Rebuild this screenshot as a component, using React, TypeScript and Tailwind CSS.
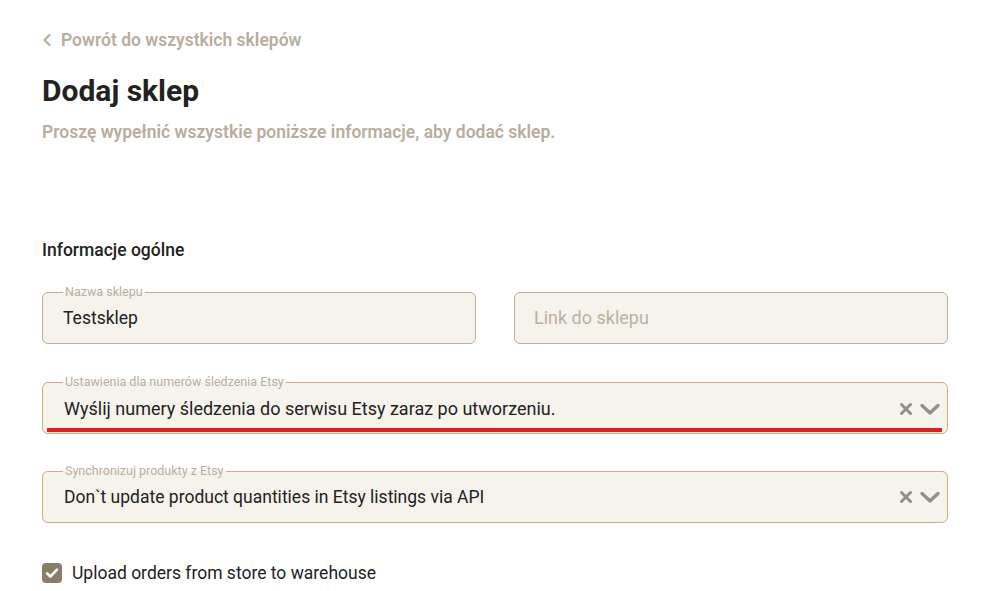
import type { ReactNode } from "react";

function Cross() {
  return (
    <svg width="14" height="14" viewBox="0 0 14 14" className="text-[#8f8f8f]">
      <path d="M2.5 2.5 11.5 11.5M11.5 2.5 2.5 11.5" stroke="currentColor" strokeWidth="3" strokeLinecap="round" />
    </svg>
  );
}

function Chevron() {
  return (
    <svg width="22" height="14" viewBox="0 0 22 14" className="text-[#8f8f8f]">
      <path d="M3 3.5 11 11 19 3.5" fill="none" stroke="currentColor" strokeWidth="3.4" strokeLinecap="round" strokeLinejoin="round" />
    </svg>
  );
}

function Field({ label, gold, children }: { label: string; gold?: boolean; children: ReactNode }) {
  return (
    <fieldset
      className={`m-0 min-w-0 rounded-[6px] border bg-[#f6f3ed] pb-[6px] pl-[20px] pr-[6px] ${gold ? "border-[#cdae7c]" : "border-[#bcae9a]"}`}
    >
      <legend className="px-[2px] text-[12.5px] leading-[14px] text-[#b9ae9f]">{label}</legend>
      {children}
    </fieldset>
  );
}

function SelectRow({ value, small }: { value: string; small?: boolean }) {
  return (
    <div className={`flex items-center pl-[1px] ${small ? "h-[38px]" : "h-[39px]"}`}>
      <span className={`flex-1 truncate text-[#222] ${small ? "text-[17.5px]" : "text-[18px]"}`}>{value}</span>
      <div className="flex items-center gap-[6px]">
        <Cross />
        <Chevron />
      </div>
    </div>
  );
}

export default function App() {
  return (
    <div className="min-h-screen bg-white px-[42px] pt-[28px] font-['Roboto',sans-serif] text-[#222]">
      <a className="flex h-[24px] items-center gap-[9px] text-[17.5px] font-semibold text-[#b8ad9e]">
        <svg width="10" height="14" viewBox="0 0 10 14">
          <path d="M7.5 2 2.5 7 7.5 12" fill="none" stroke="currentColor" strokeWidth="2.2" strokeLinecap="round" strokeLinejoin="round" />
        </svg>
        Powrót do wszystkich sklepów
      </a>
      <h1 className="mt-[21px] text-[30px] font-bold leading-[36px] text-[#222]">Dodaj sklep</h1>
      <p className="mt-[11px] text-[17.5px] font-semibold leading-[24px] text-[#b8ad9e]">
        Proszę wypełnić wszystkie poniższe informacje, aby dodać sklep.
      </p>

      <h2 className="mt-[94px] text-[17.5px] font-medium leading-[24px] text-[#222]">Informacje ogólne</h2>

      <div className="mt-[23px] grid w-[906px] grid-cols-2 items-end gap-[38px]">
        <Field label="Nazwa sklepu">
          <div className="flex h-[38px] items-center text-[17.5px] text-[#222]">Testsklep</div>
        </Field>
        <div className="flex h-[52px] items-center rounded-[6px] border border-[#bcae9a] bg-[#f6f3ed] pb-[1px] pl-[19px] text-[18px] text-[#bcb0a0]">
          Link do sklepu
        </div>
      </div>

      <div className="mt-[31px] w-[906px]">
        <fieldset className="m-0 min-w-0 rounded-[6px] border border-[#cdae7c] bg-[#f6f3ed] pb-[1px] pl-[20px] pr-[6px]">
          <legend className="px-[2px] text-[12.5px] leading-[14px] text-[#b9ae9f]">Ustawienia dla numerów śledzenia Etsy</legend>
          <SelectRow value="Wyślij numery śledzenia do serwisu Etsy zaraz po utworzeniu." />
          <div className="-ml-[16px] mr-[-1px] h-[4px] bg-[#e51c1c]" />
        </fieldset>
      </div>

      <div className="mt-[30px] w-[906px]">
        <Field label="Synchronizuj produkty z Etsy" gold>
          <SelectRow value="Don`t update product quantities in Etsy listings via API" small />
        </Field>
      </div>

      <label className="mt-[38px] flex h-[24px] items-center gap-[10px]">
        <span className="flex h-[20px] w-[20px] items-center justify-center rounded-[4px] bg-[#8b7c67]">
          <svg width="14" height="12" viewBox="0 0 14 12">
            <path d="M2 6.3 5.4 9.5 12 2.6" fill="none" stroke="white" strokeWidth="2.6" strokeLinecap="round" strokeLinejoin="round" />
          </svg>
        </span>
        <span className="text-[17.5px] text-[#222]">Upload orders from store to warehouse</span>
      </label>
    </div>
  );
}
